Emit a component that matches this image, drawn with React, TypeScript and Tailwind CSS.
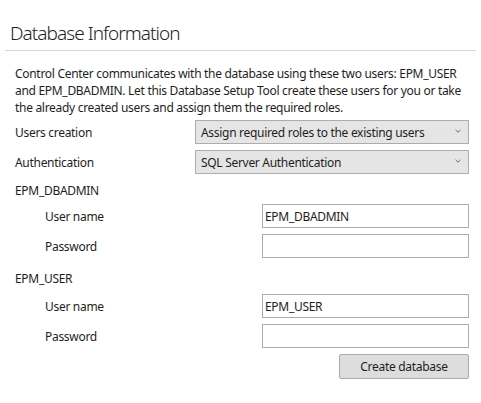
import React from "react";

const font = { fontFamily: '"Noto Sans", "Open Sans", sans-serif' };

const Select = ({ value }: { value: string }) => (
  <div className="flex h-6 w-[274px] items-center justify-between border border-[#acacac] bg-[#e5e5e5] pl-[5px] pr-[7px] text-[#1e1e1e]">
    <span>{value}</span>
    <svg width="6" height="4" viewBox="0 0 6 4" className="mt-[-3px]">
      <path d="M0.5 0.8 L3 3.2 L5.5 0.8" fill="none" stroke="#6b6b6b" strokeWidth="1" />
    </svg>
  </div>
);

const Input = ({ value = "" }: { value?: string }) => (
  <div className="flex h-6 w-[207px] items-center border border-[#acacac] bg-white px-[2px] text-[#1e1e1e]">
    {value}
  </div>
);

const Row = ({ children, className = "" }: { children: React.ReactNode; className?: string }) => (
  <div className={`flex h-6 items-center justify-between ${className}`}>{children}</div>
);

export default function App() {
  return (
    <div
      className="h-[403px] w-[481px] bg-white text-[12px] leading-[17px] tracking-[-0.025em] text-[#1e1e1e]"
      style={font}
    >
      <div className="px-[10px] pt-[22px] pb-[6px] text-[19px] font-light leading-[22px] tracking-[-0.05em]">
        Database Information
      </div>
      <div className="mx-[5px] h-px bg-[#d5d5d5]" />

      <div className="pl-[15px] pr-[12px] pt-[14px]">
        <p className="whitespace-nowrap">
          Control Center communicates with the database using these two users: EPM_USER
          <br />
          and EPM_DBADMIN. Let this Database Setup Tool create these users for you or take
          <br />
          the already created users and assign them the required roles.
        </p>

        <div className="mt-[4px] flex flex-col">
          <Row>
            <span>Users creation</span>
            <Select value="Assign required roles to the existing users" />
          </Row>
          <Row className="mt-[6px]">
            <span>Authentication</span>
            <Select value="SQL Server Authentication" />
          </Row>
          <Row className="mt-[4px]">
            <span>EPM_DBADMIN</span>
          </Row>
          <Row className="mt-[2px]">
            <span className="pl-[30px]">User name</span>
            <Input value="EPM_DBADMIN" />
          </Row>
          <Row className="mt-[6px]">
            <span className="pl-[30px]">Password</span>
            <Input />
          </Row>
          <Row className="mt-[8px]">
            <span>EPM_USER</span>
          </Row>
          <Row className="mt-[4px]">
            <span className="pl-[30px]">User name</span>
            <Input value="EPM_USER" />
          </Row>
          <Row className="mt-[6px]">
            <span className="pl-[30px]">Password</span>
            <Input />
          </Row>
          <div className="mt-[6px] flex justify-end">
            <button className="h-[25px] w-[130px] rounded-[2px] border border-[#acacac] bg-[#dddddd] text-[#1e1e1e]">
              Create database
            </button>
          </div>
        </div>
      </div>
    </div>
  );
}
